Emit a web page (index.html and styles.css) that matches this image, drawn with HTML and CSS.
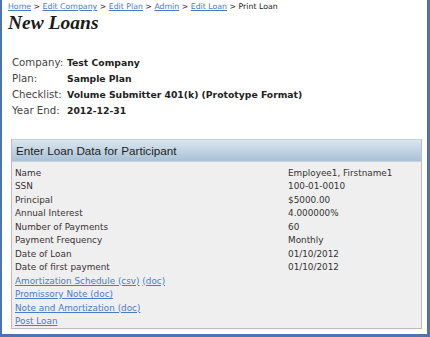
FILE: index.html
```html
<!DOCTYPE html>
<html lang="en">
<head>
    <meta charset="UTF-8">
    <title>Print Loan</title>
    <link rel="stylesheet" href="styles.css">
</head>
<body>
<div class="frame">
    <div class="crumbs">
        <a href="#">Home</a> &gt; <a href="#">Edit Company</a> &gt; <a href="#">Edit Plan</a> &gt; <a href="#">Admin</a> &gt; <a href="#">Edit Loan</a> &gt; <span class="here">Print Loan</span>
    </div>
    <h1 class="title">New Loans</h1>

    <table class="info">
        <tr><td class="lbl">Company:</td><td class="val">Test Company</td></tr>
        <tr><td class="lbl">Plan:</td><td class="val">Sample Plan</td></tr>
        <tr><td class="lbl">Checklist:</td><td class="val">Volume Submitter 401(k) (Prototype Format)</td></tr>
        <tr><td class="lbl">Year End:</td><td class="val">2012-12-31</td></tr>
    </table>

    <div class="panel">
        <div class="panel-head">Enter Loan Data for Participant</div>
        <div class="panel-body">
            <div class="row"><span>Name</span><span>Employee1, Firstname1</span></div>
            <div class="row"><span>SSN</span><span>100-01-0010</span></div>
            <div class="row"><span>Principal</span><span>$5000.00</span></div>
            <div class="row"><span>Annual Interest</span><span>4.000000%</span></div>
            <div class="row"><span>Number of Payments</span><span>60</span></div>
            <div class="row"><span>Payment Frequency</span><span>Monthly</span></div>
            <div class="row"><span>Date of Loan</span><span>01/10/2012</span></div>
            <div class="row"><span>Date of first payment</span><span>01/10/2012</span></div>
            <div class="link"><a href="#">Amortization Schedule (csv)</a> <a href="#">(doc)</a></div>
            <div class="link"><a href="#">Promissory Note (doc)</a></div>
            <div class="link"><a href="#">Note and Amortization (doc)</a></div>
            <div class="link"><a href="#">Post Loan</a></div>
        </div>
    </div>
</div>
</body>
</html>
```

FILE: styles.css
```css
html,body{margin:0;padding:0;background:#fff;}
body{font-family:"DejaVu Sans",Verdana,sans-serif;color:#333;}
a{color:#4a7cc4;text-decoration:underline;}
.frame{width:430px;height:337px;box-sizing:border-box;border:solid #4d74ab;border-width:0 3px 3px 2px;padding:0 0 0 6px;overflow:hidden;}
.crumbs{font-size:7.8px;line-height:11px;padding-top:1px;color:#333;}
.crumbs .here{color:#222;}
.title{margin:0;font:italic bold 19.5px/22px "Liberation Serif","Times New Roman",serif;color:#1a1a1a;}
.info{border-collapse:collapse;margin:20px 0 0 4px;font-size:10.2px;}
.info td{padding:0;height:16px;vertical-align:middle;}
.info .lbl{color:#444;width:55px;}
.info .val{font-weight:bold;color:#222;font-size:9.25px;}
.panel{margin:21px 5px 0 3px;border:1px solid #bcbcbc;border-top:none;background:#efefef;}
.panel-head{height:21px;padding-left:4px;font:11.7px/22px "Liberation Sans",Arial,sans-serif;color:#222;background:linear-gradient(#dbe6ef,#a9c1d6);border-top:1px solid #c5d3df;border-bottom:1px solid #c9d3dc;}
.panel-body{padding:5px 3px 0;font-size:8.85px;line-height:13.45px;}
.row{display:flex;}
.row span:first-child{width:273px;color:#3a2f33;}
.row span:last-child{color:#333;}
```
